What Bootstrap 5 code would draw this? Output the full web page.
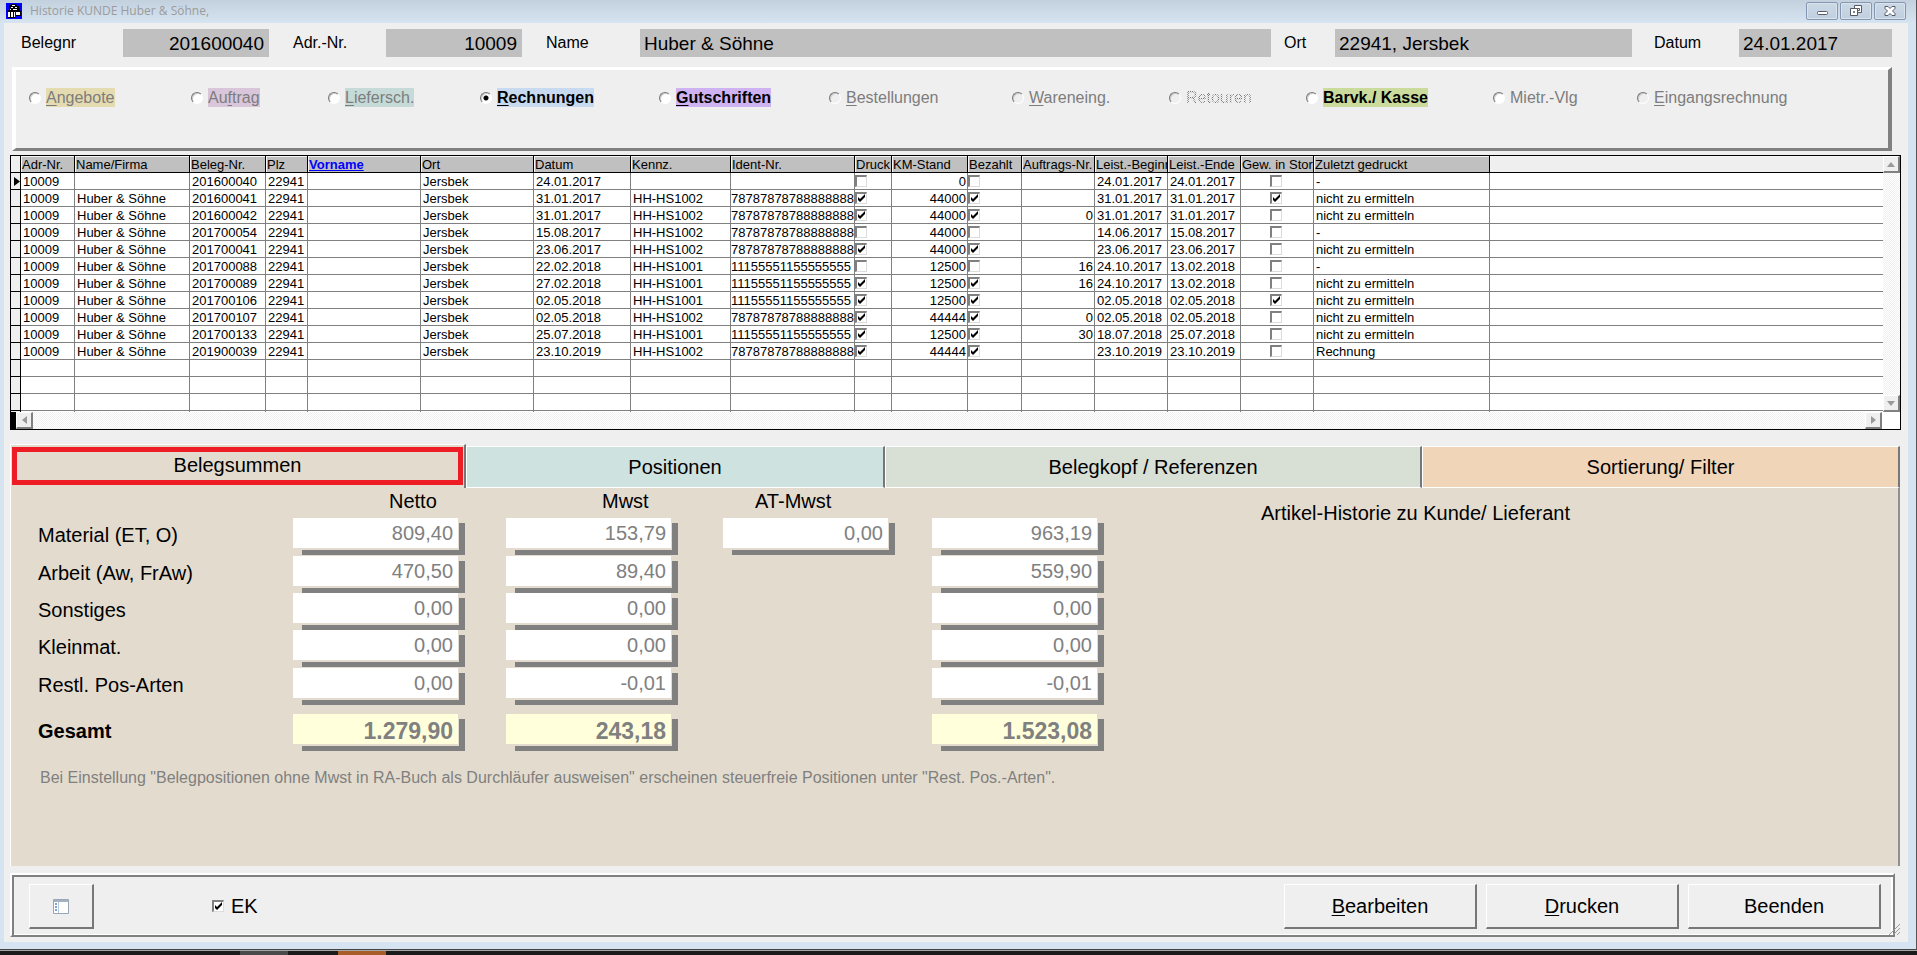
<!DOCTYPE html>
<html lang="de">
<head>
<meta charset="utf-8">
<meta name="viewport" content="width=device-width, initial-scale=1">
<title>Historie KUNDE Huber &amp; Söhne</title>
<link rel="stylesheet" href="https://cdn.jsdelivr.net/npm/bootstrap@5.3.0/dist/css/bootstrap.min.css">
<style>
:root{--face:#efefef;--blue:#d6e4f1;--sand:#e3dcce;--shade:#808080;--box:#c0c0c0}
body{font-family:"Liberation Sans",Arial,sans-serif;font-size:16px;line-height:19px;color:#000;background:#1b1b1b}
.app-frame{background:var(--blue);padding:0 8px 7px 4px;border-right:1px solid #555;border-bottom:1px solid #444;box-shadow:0 1px 0 #a8a8a8;margin-bottom:1px}
.title-bar{height:23px;margin:0 -8px 0 -4px;padding:0 10px 0 6px;background:linear-gradient(#c3d1df,#d6e4f1);color:#9b9b9b;font:12px/22px "Open Sans",sans-serif}
.title-icon{margin-top:3px}
.win-btns{gap:2px;margin-top:2px}
.win-btn{width:32px;height:18px;border:1px solid #8496b0;border-radius:2px;background:linear-gradient(#cbd8e6,#c0cfdf);box-shadow:inset 0 0 0 1px #d9e4ef}
.client{background:var(--face)}
.head-row{display:grid;grid-template-columns:102fr 146fr 24fr 93fr 136fr 24fr 94fr 631fr 13fr 51fr 297fr 22fr 85fr 153fr;height:44px;padding:6px 16px 0 17px}
.head-row label{padding-top:4px}
.head-row input{width:100%;min-width:0;height:28px;border:0;border-radius:0;background:var(--box);font-size:19px;line-height:26px;padding:1px 5px 0 4px;color:#000}
.kind-panel{height:84px;margin:0 16px 4px 8px;border:solid;border-width:3px 4px 3px 4px;border-color:#fff var(--shade) var(--shade) #fff}
.kind-grid{display:grid;grid-template-columns:162fr 137fr 152fr 179fr 170fr 183fr 157fr 137fr 187fr 144fr 251fr;padding:18px 0 0 13px}
.kind-grid div{display:flex;gap:5px;align-items:center;white-space:nowrap;min-width:0;height:19px}
input[type=radio]{appearance:none;flex:none;width:12px;height:12px;margin:0;border:1px solid;border-color:#777 #fff #fff #777;border-radius:50%;background:#fff;box-shadow:inset 1px 1px 0 #ccc}
input[type=radio]:disabled{background:var(--face)}
input[type=radio]:checked{background:radial-gradient(circle,#000 2px,#fff 3px)}
.off{color:#7d7d7d}
.hot{font-weight:700}
.kind-grid .stipple{color:transparent;background:repeating-conic-gradient(#777 0 25%,#efefef 0 50%) 0 0/2px 2px;-webkit-background-clip:text;background-clip:text}
.key{text-decoration:underline;text-underline-offset:2px;text-decoration-thickness:1px}
.grid-box{margin:0 7px 14px 6px;border:1px solid #000;background:#fff}
.grid-view{height:256px;overflow:hidden;min-width:0}
.history{table-layout:fixed;width:100%;border-collapse:separate;border-spacing:0;font-size:13px;line-height:15px}
.history th,.history td{height:17px;padding:1px 2px 0;border-right:1px solid var(--shade);border-bottom:1px solid var(--shade);overflow:hidden;white-space:nowrap;vertical-align:top;font-weight:400}
.history thead th{background:var(--box);border-color:#000;box-shadow:inset 1px 1px 0 #f4f4f4;padding:2px 0 0 1px;line-height:14px}
.history td:last-child{border-right:0}
.history thead th:last-child{background:var(--face);border-right:0}
.history .pick{background:var(--face);border-color:#000;padding:0}
.history .num{text-align:right;padding-right:1px}
.history .box-cell{padding-left:0}
.history .box-mid{padding-right:4px}
.history .ident{padding-left:0;padding-right:0}
.tick{appearance:none;display:block;width:12px;height:12px;margin:1px 0 0;border:solid;border-width:2px 1px 1px 2px;border-color:var(--shade) #dcdcdc #dcdcdc var(--shade);background:#fff}
.box-mid .tick{margin:1px auto 0}
.tick:checked{background:#fff url("data:image/svg+xml,%3Csvg xmlns='http://www.w3.org/2000/svg' viewBox='0 0 9 9'%3E%3Cpath d='M1 3v3l2 2 5-5V0L3 5z'/%3E%3C/svg%3E") center/9px 9px no-repeat}
.track{background:repeating-conic-gradient(#fff 0 25%,#f0f0f0 0 50%) 0 0/2px 2px}
.arrow-btn{width:17px;height:17px;padding:0;border:solid;border-width:1px 2px 2px 1px;border-color:#fff var(--shade) var(--shade) #fff;background:var(--face);display:flex;align-items:center;justify-content:center}
.tab-row{display:grid;grid-template-columns:456fr 419fr 537fr 478fr;margin:0 8px 0 6px;height:44px;align-items:end}
.tab-row button{height:42px;border:solid;border-width:1px 2px 1px 1px;border-color:#fff #777 #fff #fff;font-size:20px;line-height:24px;padding:0;color:#000}
.tab-row button:first-child{height:44px;border-bottom:0;border-top-color:#fff;background:var(--sand);padding:2px 1px 3px}
.tab-row button:first-child span{display:block;border:5px solid #ee1c25;height:38px;line-height:26px}
.sheet{margin:0 8px 7px 6px;background:var(--sand);border-left:1px solid #fff;border-right:2px solid #909090;padding:4px 0 0 27px;font-size:20px;line-height:24px;min-height:360px}
.sums{display:grid;grid-template-columns:255px 213px 217px 209px 172px;grid-template-rows:26px 38px 37px 37px 38px 46px 37px}
.sums .cap{padding-left:96px;line-height:18px}
.sums .cap-at{padding-left:32px}
.sums label{padding-top:5px}
.sunk{width:172px;height:37px;background:linear-gradient(var(--shade),var(--shade)) right bottom/163px 32px no-repeat}
.sunk input{display:block;width:165px;height:30px;border:0;border-radius:0;text-align:right;color:var(--shade);background:#fff;padding:0 5px 0 0;font-size:20px;line-height:28px;box-shadow:1px 2px 0 var(--sand)}
.sunk .total{background:#ffffdc;font-size:23px;font-weight:700;padding:4px 5px 0 0}
.note{font-size:16px;line-height:19px;color:#808080;margin:17px 0 0 2px}
.history-title{margin-left:157px;padding-top:9px}
.foot{margin:0 13px 5px 6px;height:64px;border:2px solid;border-color:#fff var(--shade) var(--shade) #fff;box-shadow:inset 2px 2px 0 var(--shade),inset -2px -1px 0 #fff;padding:9px 12px 0 17px}
.push{height:45px;width:193px;border:solid;border-width:1px 2px 2px 1px;border-color:#fff #777 #777 #fff;background:var(--face);font-size:20px;line-height:24px;padding:0;color:#000}
.push-small{width:65px}
.ek-group{gap:7px;padding:10px 0 0 118px}
.ek-group .tick{margin-top:6px}
.ek-group label{font-size:20px;line-height:24px}
.size-grip{right:-7px;bottom:0}
.task-strip{height:4px}
</style>
</head>
<body class="d-flex flex-column min-vh-100">
<div class="app-frame d-flex flex-column flex-grow-1">
  <header class="title-bar d-flex align-items-start">
    <svg class="title-icon me-2" width="16" height="16" viewBox="0 0 16 16" aria-hidden="true"><path fill="#00f" d="M0 0h16v16H0z"/><path d="M4 2l2-1h4l1 2h2v2h1v3H9v7H2V9H1V7h2z"/><path fill="#fff" d="M6 2h3v1H6zM5 4h2v1H5zM9 4h2v1H9zM4 6h1v1H4zM7 6h4v1H7zM2 9h2v5H2zM5 9h2v5H5zM8 9h1v5H8z"/><path d="M10 8h5v5h-5z"/><path fill="#fff" d="M10 9h4v3h-4z"/></svg>
    <span class="flex-grow-1">Historie KUNDE Huber &amp; Söhne,</span>
    <div class="win-btns d-flex">
      <button class="win-btn p-0 d-flex justify-content-center align-items-center" aria-label="Minimieren"><svg width="14" height="12" viewBox="0 0 14 12"><rect x="2.500" y="6.500" width="10" height="3" rx="1" fill="#fff" stroke="#555a66"/></svg></button>
      <button class="win-btn p-0 d-flex justify-content-center align-items-center" aria-label="Wiederherstellen"><svg width="14" height="12" viewBox="0 0 14 12" fill="#fff" stroke="#555a66"><path d="M5.500.500h7v7h-7z"/><path d="M8.500 3.500h2v2h-2z"/><path d="M1.500 3.500h7v7h-7z"/><path d="M4.500 6.500h1v1h-1z"/></svg></button>
      <button class="win-btn p-0 d-flex justify-content-center align-items-center" aria-label="Schließen"><svg width="14" height="12" viewBox="0 0 14 12" fill="#fff" stroke="#555a66"><path d="M2 1.500h3l2 2 2-2h3v2L9.500 6 12 8.500v2H9l-2-2-2 2H2v-2L4.500 6 2 3.500z"/></svg></button>
    </div>
  </header>

  <main class="client d-flex flex-column flex-grow-1">
    <div class="head-row">
      <label for="belegnr">Belegnr</label><input id="belegnr" class="text-end" value="201600040" readonly><span></span>
      <label for="adrnr">Adr.-Nr.</label><input id="adrnr" class="text-end" value="10009" readonly><span></span>
      <label for="kname">Name</label><input id="kname" value="Huber &amp; Söhne" readonly><span></span>
      <label for="ort">Ort</label><input id="ort" value="22941, Jersbek" readonly><span></span>
      <label for="datum">Datum</label><input id="datum" value="24.01.2017" readonly>
    </div>

    <div class="kind-panel">
      <div class="kind-grid">
        <div><input type="radio" name="art" id="a1"><label for="a1" class="off" style="background:#e5dbb0"><span class="key">A</span>ngebote</label></div>
        <div><input type="radio" name="art" id="a2"><label for="a2" class="off" style="background:#dac6da">Au<span class="key">f</span>trag</label></div>
        <div><input type="radio" name="art" id="a3"><label for="a3" class="off" style="background:#c6dbd8"><span class="key">L</span>iefersch.</label></div>
        <div><input type="radio" name="art" id="a4" checked><label for="a4" class="hot" style="background:#c7daf0"><span class="key">R</span>echnungen</label></div>
        <div><input type="radio" name="art" id="a5"><label for="a5" class="hot" style="background:#cfb2f2"><span class="key">G</span>utschriften</label></div>
        <div><input type="radio" name="art" id="a6" disabled><label for="a6" class="off"><span class="key">B</span>estellungen</label></div>
        <div><input type="radio" name="art" id="a7" disabled><label for="a7" class="off"><span class="key">W</span>areneing.</label></div>
        <div><input type="radio" name="art" id="a8" disabled><label for="a8" class="stipple">Retouren</label></div>
        <div><input type="radio" name="art" id="a9"><label for="a9" class="hot" style="background:#cadb9c">Barvk./ Kasse</label></div>
        <div><input type="radio" name="art" id="a10"><label for="a10" class="off">Mietr.-Vlg</label></div>
        <div><input type="radio" name="art" id="a11" disabled><label for="a11" class="off"><span class="key">E</span>ingangsrechnung</label></div>
      </div>
    </div>

    <div class="grid-box">
      <div class="d-flex">
        <div class="grid-view flex-grow-1">
          <table class="history">
            <colgroup id="cols"></colgroup>
            <thead><tr><th class="pick"></th><th>Adr-Nr.</th><th>Name/Firma</th><th>Beleg-Nr.</th><th>Plz</th><th><a href="#" class="fw-bold" style="color:#00f">Vorname</a></th><th>Ort</th><th>Datum</th><th>Kennz.</th><th>Ident-Nr.</th><th>Druck</th><th>KM-Stand</th><th>Bezahlt</th><th>Auftrags-Nr.</th><th>Leist.-Beginn</th><th>Leist.-Ende</th><th>Gew. in Storno</th><th>Zuletzt gedruckt</th><th></th></tr></thead>
            <tbody id="rows"></tbody>
          </table>
        </div>
        <div class="track d-flex flex-column justify-content-between" style="width:18px">
          <button class="arrow-btn" aria-label="Nach oben"><svg width="8" height="5"><path d="M0 5l4-5 4 5z" fill="#999"/></svg></button>
          <button class="arrow-btn" aria-label="Nach unten"><svg width="8" height="5"><path d="M0 0l4 5 4-5z" fill="#999"/></svg></button>
        </div>
      </div>
      <div class="d-flex" style="padding-right:18px">
        <div class="bg-black" style="width:5px"></div>
        <div class="track d-flex justify-content-between flex-grow-1">
          <button class="arrow-btn" aria-label="Nach links"><svg width="5" height="8"><path d="M5 0L0 4l5 4z" fill="#999"/></svg></button>
          <button class="arrow-btn" aria-label="Nach rechts"><svg width="5" height="8"><path d="M0 0l5 4-5 4z" fill="#999"/></svg></button>
        </div>
      </div>
    </div>

    <nav class="tab-row">
      <button><span>Belegsummen</span></button>
      <button style="background:#cee2e0">Positionen</button>
      <button style="background:#d8dfd4">Belegkopf / Referenzen</button>
      <button style="background:#f0d5b8">Sortierung/ Filter</button>
    </nav>

    <section class="sheet flex-grow-1">
      <div class="d-flex">
        <div>
          <div class="sums">
            <span></span><span class="cap">Netto</span><span class="cap">Mwst</span><span class="cap cap-at">AT-Mwst</span><span></span>
            <label for="m1">Material (ET, O)</label><div class="sunk"><input id="m1" value="809,40" readonly></div><div class="sunk"><input aria-label="Mwst" value="153,79" readonly></div><div class="sunk"><input aria-label="AT-Mwst" value="0,00" readonly></div><div class="sunk"><input aria-label="Summe" value="963,19" readonly></div>
            <label for="m2">Arbeit (Aw, FrAw)</label><div class="sunk"><input id="m2" value="470,50" readonly></div><div class="sunk"><input aria-label="Mwst" value="89,40" readonly></div><span></span><div class="sunk"><input aria-label="Summe" value="559,90" readonly></div>
            <label for="m3">Sonstiges</label><div class="sunk"><input id="m3" value="0,00" readonly></div><div class="sunk"><input aria-label="Mwst" value="0,00" readonly></div><span></span><div class="sunk"><input aria-label="Summe" value="0,00" readonly></div>
            <label for="m4">Kleinmat.</label><div class="sunk"><input id="m4" value="0,00" readonly></div><div class="sunk"><input aria-label="Mwst" value="0,00" readonly></div><span></span><div class="sunk"><input aria-label="Summe" value="0,00" readonly></div>
            <label for="m5">Restl. Pos-Arten</label><div class="sunk"><input id="m5" value="0,00" readonly></div><div class="sunk"><input aria-label="Mwst" value="-0,01" readonly></div><span></span><div class="sunk"><input aria-label="Summe" value="-0,01" readonly></div>
            <label for="m6" class="fw-bold">Gesamt</label><div class="sunk"><input id="m6" class="total" value="1.279,90" readonly></div><div class="sunk"><input aria-label="Mwst" class="total" value="243,18" readonly></div><span></span><div class="sunk"><input aria-label="Summe" class="total" value="1.523,08" readonly></div>
          </div>
          <p class="note">Bei Einstellung "Belegpositionen ohne Mwst in RA-Buch als Durchläufer ausweisen" erscheinen steuerfreie Positionen unter "Rest. Pos.-Arten".</p>
        </div>
        <div class="history-title">Artikel-Historie zu Kunde/ Lieferant</div>
      </div>
    </section>

    <footer class="foot d-flex align-items-start position-relative">
      <button class="push push-small d-flex align-items-center justify-content-center" aria-label="Ansicht"><svg width="16" height="15" viewBox="0 0 16 15"><path d="M.500.500h15v14H.500z" fill="#fff" stroke="#9aa5b5"/><path d="M1 1h14v2H1z" fill="#a5b1c2"/><path d="M5.500 3v11" stroke="#b9c6d6"/><path d="M2 4h2v2H2zM2 7h2v2H2zM2 10h2v2H2z" fill="#7ba3d4"/></svg></button>
      <div class="ek-group d-flex flex-grow-1">
        <input class="tick" type="checkbox" id="ek" checked><label for="ek">EK</label>
      </div>
      <div class="d-flex" style="gap:9px">
        <button class="push"><span class="key">B</span>earbeiten</button>
        <button class="push"><span class="key">D</span>rucken</button>
        <button class="push">Beenden</button>
      </div>
      <svg class="size-grip position-absolute" width="11" height="11" viewBox="0 0 11 11" stroke="#999" aria-hidden="true"><path d="M0 11L11 0M4 11l7-7M8 11l3-3"/></svg>
    </footer>
  </main>
</div>
<div class="task-strip d-flex"><span style="width:240px"></span><span style="width:48px;background:#4a4a4a"></span><span style="width:50px"></span><span style="width:48px;background:#a85c28"></span></div>

<script>
const widths=[10,54,115,76,42,113,113,97,100,124,37,76,54,73,73,73,73,176];
document.getElementById('cols').innerHTML=widths.map(w=>`<col style="width:${w}px">`).join('')+'<col>';
const A='78787878788888888',B='11155551155555555',N='nicht zu ermitteln',H='Huber & Söhne';
/* name, Beleg, Datum, Kennzeichen, Ident, gedruckt, km, bezahlt, Auftrag, Beginn, Ende, Storno, zuletzt */
const data=[
['','201600040','24.01.2017','','',0,'0',0,'','24.01.2017','24.01.2017',0,'-'],
[H,'201600041','31.01.2017','HH-HS1002',A,1,'44000',1,'','31.01.2017','31.01.2017',1,N],
[H,'201600042','31.01.2017','HH-HS1002',A,1,'44000',1,'0','31.01.2017','31.01.2017',0,N],
[H,'201700054','15.08.2017','HH-HS1002',A,0,'44000',0,'','14.06.2017','15.08.2017',0,'-'],
[H,'201700041','23.06.2017','HH-HS1002',A,1,'44000',1,'','23.06.2017','23.06.2017',0,N],
[H,'201700088','22.02.2018','HH-HS1001',B,0,'12500',0,'16','24.10.2017','13.02.2018',0,'-'],
[H,'201700089','27.02.2018','HH-HS1001',B,1,'12500',1,'16','24.10.2017','13.02.2018',0,N],
[H,'201700106','02.05.2018','HH-HS1001',B,1,'12500',1,'','02.05.2018','02.05.2018',1,N],
[H,'201700107','02.05.2018','HH-HS1002',A,1,'44444',1,'0','02.05.2018','02.05.2018',0,N],
[H,'201700133','25.07.2018','HH-HS1001',B,1,'12500',1,'30','18.07.2018','25.07.2018',0,N],
[H,'201900039','23.10.2019','HH-HS1002',A,1,'44444',1,'','23.10.2019','23.10.2019',0,'Rechnung'],
null,null,null,null];
const box=(v,l)=>`<input type="checkbox" class="tick" aria-label="${l}"${v?' checked':''}>`;
const td=(v,c='')=>`<td class="${c}">${String(v).replace('&','&amp;')}</td>`;
document.getElementById('rows').innerHTML=data.map((r,i)=>{
  const mark=i?'':'<svg width="9" height="14" class="d-block"><path d="M3 4v9l6-4.500z"/></svg>';
  const first=`<th class="pick">${mark}</th>`;
  if(!r)return `<tr>${first}${'<td></td>'.repeat(18)}</tr>`;
  return `<tr>${first}${td('10009')}${td(r[0])}${td(r[1])}${td('22941')}${td('')}${td('Jersbek')}${td(r[2])}${td(r[3])}${td(r[4],'ident')}<td class="box-cell">${box(r[5],'Druck')}</td>${td(r[6],'num')}<td class="box-cell">${box(r[7],'Bezahlt')}</td>${td(r[8],'num')}${td(r[9])}${td(r[10])}<td class="box-mid">${box(r[11],'Storno')}</td>${td(r[12])}<td></td></tr>`;
}).join('');
</script>
<script src="https://cdn.jsdelivr.net/npm/bootstrap@5.3.0/dist/js/bootstrap.bundle.min.js"></script>
</body>
</html>
